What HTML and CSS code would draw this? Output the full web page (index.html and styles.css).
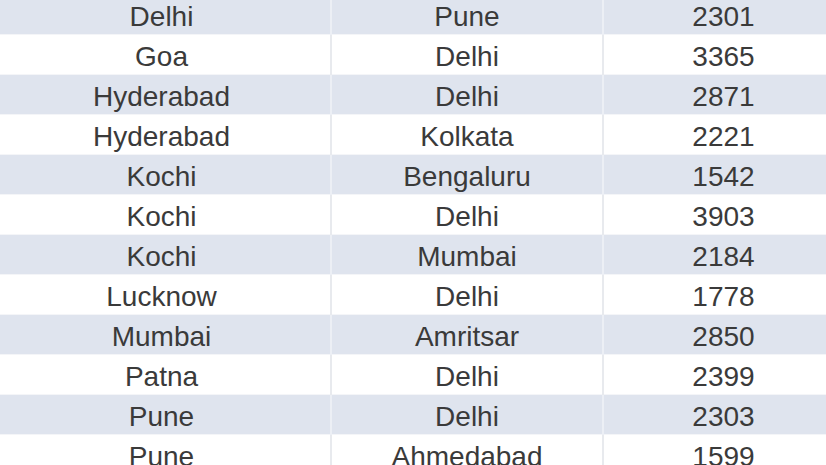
FILE: index.html
```html
<!DOCTYPE html>
<html>
<head>
<meta charset="utf-8">
<link rel="stylesheet" href="styles.css">
</head>
<body>
<div class="table">
  <div class="row alt"><div class="cell c1">Delhi</div><div class="cell c2">Pune</div><div class="cell c3">2301</div></div>
  <div class="row"><div class="cell c1">Goa</div><div class="cell c2">Delhi</div><div class="cell c3">3365</div></div>
  <div class="row alt"><div class="cell c1">Hyderabad</div><div class="cell c2">Delhi</div><div class="cell c3">2871</div></div>
  <div class="row"><div class="cell c1">Hyderabad</div><div class="cell c2">Kolkata</div><div class="cell c3">2221</div></div>
  <div class="row alt"><div class="cell c1">Kochi</div><div class="cell c2">Bengaluru</div><div class="cell c3">1542</div></div>
  <div class="row"><div class="cell c1">Kochi</div><div class="cell c2">Delhi</div><div class="cell c3">3903</div></div>
  <div class="row alt"><div class="cell c1">Kochi</div><div class="cell c2">Mumbai</div><div class="cell c3">2184</div></div>
  <div class="row"><div class="cell c1">Lucknow</div><div class="cell c2">Delhi</div><div class="cell c3">1778</div></div>
  <div class="row alt"><div class="cell c1">Mumbai</div><div class="cell c2">Amritsar</div><div class="cell c3">2850</div></div>
  <div class="row"><div class="cell c1">Patna</div><div class="cell c2">Delhi</div><div class="cell c3">2399</div></div>
  <div class="row alt"><div class="cell c1">Pune</div><div class="cell c2">Delhi</div><div class="cell c3">2303</div></div>
  <div class="row"><div class="cell c1">Pune</div><div class="cell c2">Ahmedabad</div><div class="cell c3">1599</div></div>
</div>
</body>
</html>
```
FILE: styles.css
```css
html, body {
  margin: 0;
  padding: 0;
  background: #ffffff;
  overflow: hidden;
}
.table {
  margin-top: -5px;
  margin-left: -7px;
  width: 850px;
  font-family: "Liberation Sans", Arial, sans-serif;
  font-size: 28px;
  color: #3a3a3a;
}
.row {
  display: grid;
  grid-template-columns: 339px 272px 239px;
  height: 40px;
  background: #ffffff;
  box-sizing: border-box;
  border-bottom: 1px solid #f4f5f8;
}
.row.alt {
  background: #dfe4ee;
}
.cell {
  padding-top: 3px;
  line-height: 38px;
  text-align: center;
  white-space: nowrap;
}
.c1 {
  border-right: 2px solid #e8eaee;
}
.c2 {
  border-right: 2px solid #e8eaee;
}
.row.alt .c1,
.row.alt .c2 {
  border-right-color: #eceff5;
}
```
